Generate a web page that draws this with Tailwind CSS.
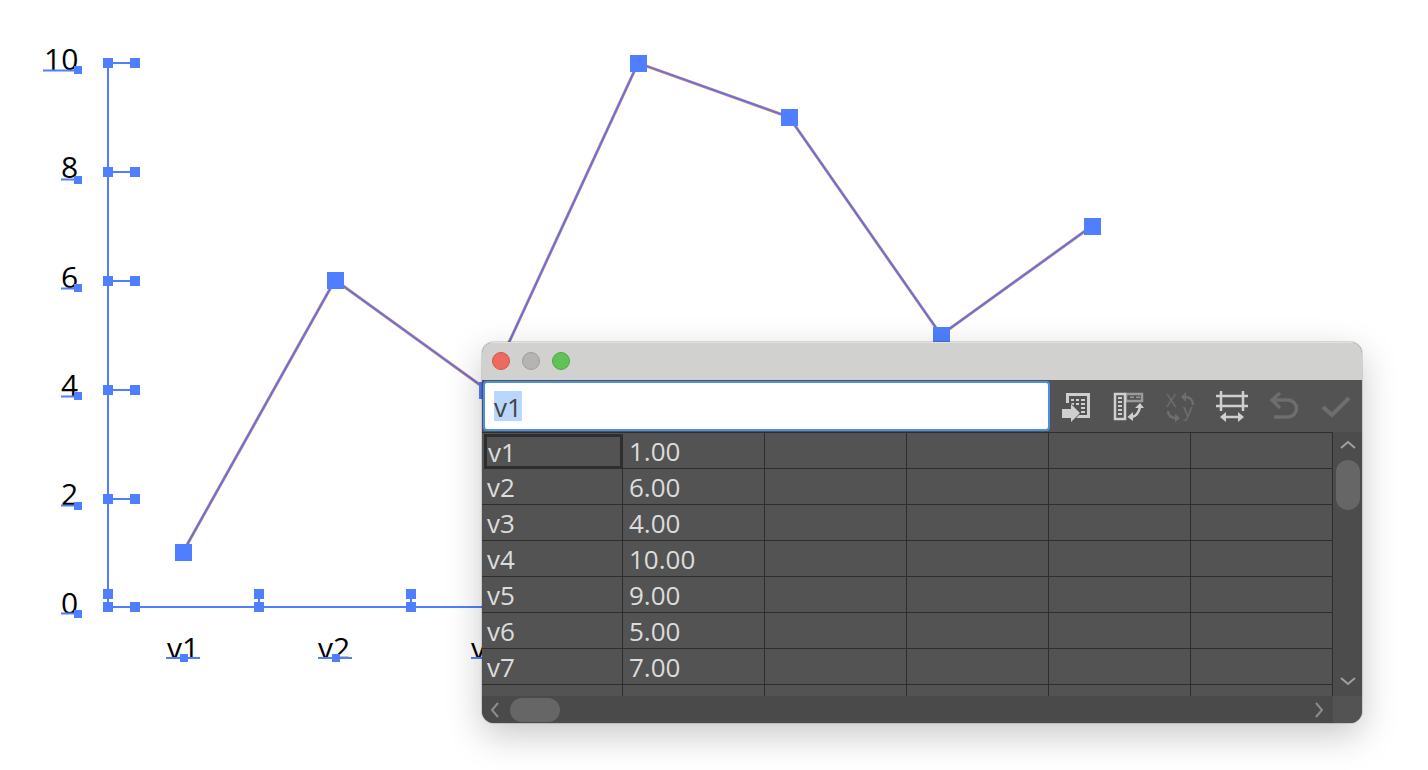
<!DOCTYPE html>
<html lang="en">
<head>
  <meta charset="UTF-8" />
  <title>Graph Data</title>
  <script src="https://cdn.jsdelivr.net/npm/@tailwindcss/browser@4"></script>
</head>
<body class="relative w-[1428px] h-[770px] overflow-hidden bg-white font-['Open_Sans',sans-serif]">

  <!-- chart canvas -->
  <svg class="absolute inset-0" width="1428" height="770" viewBox="0 0 1428 770">
    <g fill="#000" font-size="30" font-family="Open Sans, sans-serif">
      <text x="44" y="70">10</text>
      <text x="61" y="178">8</text>
      <text x="61" y="288">6</text>
      <text x="61" y="396">4</text>
      <text x="61" y="505">2</text>
      <text x="61" y="614">0</text>
      <text x="167" y="659">v1</text>
      <text x="318" y="659">v2</text>
      <text x="471" y="659">v3</text>
    </g>
    <!-- series -->
    <polyline points="183,552 335,280 487,390 638,63 789,117 941,335 1092,226" fill="none" stroke="#ee8560" stroke-width="3" />
    <polyline points="183,552 335,280 487,390 638,63 789,117 941,335 1092,226" fill="none" stroke="#4f76f5" stroke-width="1.800" />
    <!-- axes -->
    <g stroke="#4f7fff" stroke-width="2" fill="none">
      <path d="M108 63V607H482" />
      <path d="M108 63H135M108 172H135M108 281H135M108 390H135M108 499H135" />
      <path d="M108 594V607M259 594V607M411 594V607" />
      <path d="M43 70.500H82M61 179.500H82M61 288.500H82M61 396.500H82M61 505.500H82M61 613.500H82M166 658H200M318 658H352M471 658H482" />
    </g>
    <g fill="#4f7fff">
      <rect x="175" y="544" width="17" height="17" /><rect x="327" y="272" width="17" height="17" />
      <rect x="479" y="382" width="17" height="17" /><rect x="630" y="55" width="17" height="17" />
      <rect x="781" y="109" width="17" height="17" /><rect x="933" y="327" width="17" height="17" />
      <rect x="1084" y="218" width="17" height="17" />
      <rect x="103" y="58" width="10" height="10" /><rect x="130" y="58" width="10" height="10" />
      <rect x="103" y="167" width="10" height="10" /><rect x="130" y="167" width="10" height="10" />
      <rect x="103" y="276" width="10" height="10" /><rect x="130" y="276" width="10" height="10" />
      <rect x="103" y="385" width="10" height="10" /><rect x="130" y="385" width="10" height="10" />
      <rect x="103" y="494" width="10" height="10" /><rect x="130" y="494" width="10" height="10" />
      <rect x="103" y="602" width="10" height="10" /><rect x="130" y="602" width="10" height="10" />
      <rect x="103" y="589" width="10" height="10" />
      <rect x="254" y="602" width="10" height="10" /><rect x="254" y="589" width="10" height="10" />
      <rect x="406" y="602" width="10" height="10" /><rect x="406" y="589" width="10" height="10" />
      <rect x="74" y="66" width="8" height="8" /><rect x="74" y="176" width="8" height="8" />
      <rect x="74" y="284" width="8" height="8" /><rect x="74" y="392" width="8" height="8" />
      <rect x="74" y="502" width="8" height="8" /><rect x="74" y="610" width="8" height="8" />
      <rect x="180" y="654" width="8" height="8" /><rect x="332" y="654" width="8" height="8" />
    </g>
  </svg>

  <!-- graph data window -->
  <div class="absolute left-[482px] top-[342px] w-[880px] h-[381px] flex flex-col overflow-hidden rounded-xl bg-[#535353] shadow-[0_0_0_1px_rgba(0,0,0,0.12),0_12px_36px_rgba(0,0,0,0.22)]">
    <div class="h-[38px] shrink-0 flex items-center gap-3 pl-[10px] pb-[2px] bg-[#d1d1cf] border-t border-[#e2e2e0]">
      <span class="w-[18px] h-[18px] rounded-full bg-[#ee6a5f] border border-[#d0554b]"></span>
      <span class="w-[18px] h-[18px] rounded-full bg-[#b5b4b2] border border-[#9f9e9c]"></span>
      <span class="w-[18px] h-[18px] rounded-full bg-[#5fc454] border border-[#4fa946]"></span>
    </div>

    <div class="h-[52px] shrink-0 flex items-center pl-px">
      <div class="w-[567px] h-[50px] flex items-center pl-[9px] bg-white border-2 border-[#4a90e2] rounded">
        <span class="h-[30px] pt-[2px] flex items-center text-[26px] leading-none text-[#444] bg-[#bad6fb]">v1</span>
      </div>
      <div class="flex items-center gap-5 ml-[10px]">
        <!-- apply / import -->
        <svg width="32" height="32" viewBox="0 0 32 32" fill="#cfcfcf" class="overflow-visible">
          <path d="M6 3H30V28H13V25H27V6H9V13H6Z" />
          <path d="M11 9h3v2h-3zM16 9h3v2h-3zM21 9h4v2h-4zM11 13h3v2h-3zM16 13h3v2h-3zM21 13h4v2h-4zM21 17h4v2h-4zM21 21h4v2h-4z" />
          <path d="M2 19H11V14L20 23L11 32V28H2Z" stroke="#535353" stroke-width="1.500" paint-order="stroke" />
        </svg>
        <!-- transpose -->
        <svg width="32" height="32" viewBox="0 0 32 32" class="overflow-visible">
          <path d="M14 4H30V11H14Z" fill="none" stroke="#9a9a9a" stroke-width="2.500" />
          <path d="M18 6.500h4v1.500h-4zM24 6.500h4v1.500h-4z" fill="#9a9a9a" />
          <path d="M3 4H13V29H3Z" fill="none" stroke="#cfcfcf" stroke-width="2.500" />
          <path d="M6 7h4v2H6zM6 11h4v2H6zM6 15h4v2H6zM6 19h4v2H6zM6 23h4v2H6z" fill="#cfcfcf" />
          <path d="M28 17C27 22 24 26 20 27" fill="none" stroke="#cfcfcf" stroke-width="2.500" />
          <path d="M23 18L28 13L32 18ZM21 22L15.500 27L21 31Z" fill="#cfcfcf" />
        </svg>
        <!-- switch x/y -->
        <svg width="32" height="32" viewBox="0 0 32 32" fill="none" stroke="#6e6e6e" stroke-width="2.500" class="overflow-visible">
          <text x="2" y="17" font-size="18" fill="#6e6e6e" stroke="none" font-family="Open Sans, sans-serif">X</text>
          <text x="19" y="27" font-size="19" fill="#6e6e6e" stroke="none" font-family="Open Sans, sans-serif">y</text>
          <path d="M21 7C26 7 29 10 29 15" />
          <path d="M22 2L17 7L22 12Z" fill="#6e6e6e" stroke="none" />
          <path d="M4 21C4 25 7 28 11 28" />
          <path d="M11 23.500L16 28L11 32.500Z" fill="#6e6e6e" stroke="none" />
        </svg>
        <!-- cell style -->
        <svg width="32" height="32" viewBox="0 0 32 32" fill="none" stroke="#cfcfcf" stroke-width="2.500" class="overflow-visible">
          <path d="M5 1V21M27 1V21M0 6H32M0 16H32" />
          <path d="M9 27H23" />
          <path d="M10 22L4 27L10 32ZM22 22L28 27L22 32Z" fill="#cfcfcf" stroke="none" />
        </svg>
        <!-- revert -->
        <svg width="32" height="32" viewBox="0 0 32 32" fill="none" stroke="#6e6e6e" stroke-width="3.500" class="overflow-visible">
          <path d="M4 10H20A8.500 8.500 0 0 1 20 27H6" />
          <path d="M12 3L4 10L12 18" />
        </svg>
        <!-- apply -->
        <svg width="32" height="32" viewBox="0 0 32 32" fill="none" stroke="#6e6e6e" stroke-width="4" class="overflow-visible">
          <path d="M3 17L12 25L29 8" />
        </svg>
      </div>
    </div>

    <div class="flex-1 min-h-0 flex">
      <div class="w-[851px] flex flex-col">
        <div id="cells" class="flex-1 min-h-0 overflow-hidden border-t border-[#2e2e2e] grid grid-cols-[141px_repeat(5,142px)] auto-rows-[36px] text-[26px] leading-[37px] text-[#dcdcdc]"></div>
        <!-- horizontal scrollbar -->
        <div class="h-[27px] shrink-0 flex items-center justify-between bg-[#4a4a4a] pl-[8px] pr-[9px]">
          <div class="flex items-center gap-[11px]">
            <svg width="9" height="16" viewBox="0 0 9 16" fill="none" stroke="#8c8c8c" stroke-width="2"><path d="M8 1L2 8L8 15" /></svg>
            <div class="w-[50px] h-[24px] rounded-full bg-[#666]"></div>
          </div>
          <svg width="9" height="16" viewBox="0 0 9 16" fill="none" stroke="#8c8c8c" stroke-width="2"><path d="M1 1L7 8L1 15" /></svg>
        </div>
      </div>
      <!-- vertical scrollbar -->
      <div class="w-[29px] flex flex-col">
        <div class="flex-1 min-h-0 flex flex-col items-center justify-between bg-[#4c4c4c] pt-[8px] pb-[10px]">
          <div class="flex flex-col items-center gap-[11px]">
            <svg width="16" height="9" viewBox="0 0 16 9" fill="none" stroke="#a0a0a0" stroke-width="2"><path d="M1 8L8 2L15 8" /></svg>
            <div class="w-[24px] h-[50px] rounded-full bg-[#666]"></div>
          </div>
          <svg width="16" height="9" viewBox="0 0 16 9" fill="none" stroke="#a0a0a0" stroke-width="2"><path d="M1 1L8 7L15 1" /></svg>
        </div>
        <div class="h-[27px] shrink-0 bg-[#535353]"></div>
      </div>
    </div>
  </div>

  <script>
    const rows = [['v1', '1.00'], ['v2', '6.00'], ['v3', '4.00'], ['v4', '10.00'], ['v5', '9.00'], ['v6', '5.00'], ['v7', '7.00'], ['', '']];
    let html = '';
    rows.forEach((row, r) => {
      const label = r === 0
        ? 'border-[3px] border-[#2e2e2e] ml-[2px] mt-[1px] pl-[1px] leading-[30px]'
        : 'border-r border-b border-[#2e2e2e] pl-[5px]';
      html += `<div class="${label}">${row[0]}</div>`;
      html += `<div class="border-r border-b border-[#2e2e2e] pl-[6px]">${row[1]}</div>`;
      for (let c = 0; c < 4; c++) html += '<div class="border-r border-b border-[#2e2e2e]"></div>';
    });
    document.getElementById('cells').innerHTML = html;
  </script>
</body>
</html>
